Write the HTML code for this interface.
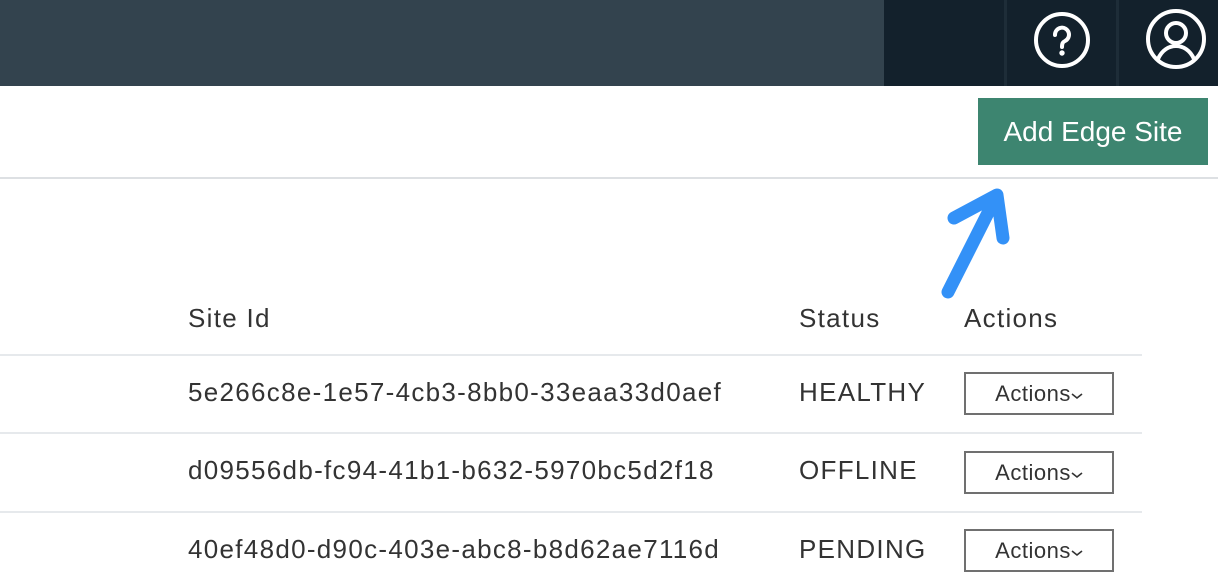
<!DOCTYPE html>
<html><head><style>
body{margin:0;width:1218px;height:576px;overflow:hidden;background:#fff;font-family:"Liberation Sans",sans-serif;color:#333;position:relative}
.a{position:absolute}
.t{position:absolute;font-size:26px;line-height:30px;color:#333;white-space:nowrap;letter-spacing:1.3px}
.btn{position:absolute;left:964px;width:146px;height:39px;border:2px solid #707070;font-size:22px;line-height:39px;text-align:center;color:#333;box-sizing:content-box;letter-spacing:0.5px}
.line{position:absolute;left:0;width:1142px;height:2px;background:#e6e9ec}
</style></head><body>
<div class="a" style="left:0;top:0;width:884px;height:86px;background:#33434e"></div>
<div class="a" style="left:884px;top:0;width:334px;height:86px;background:#13212c"></div>
<div class="a" style="left:1004px;top:0;width:3px;height:86px;background:#1e2d38"></div>
<div class="a" style="left:1116px;top:0;width:3px;height:86px;background:#1e2d38"></div>
<svg class="a" style="left:1030px;top:8px" width="64" height="64" viewBox="0 0 64 64"><circle cx="32" cy="32" r="26" fill="none" stroke="#fff" stroke-width="4"/><path d="M25 27a7 7 0 1 1 10 6c-2 1-3 2-3 6" fill="none" stroke="#fff" stroke-width="4" stroke-linecap="round"/><circle cx="32" cy="45" r="2.7" fill="#fff"/></svg>
<svg class="a" style="left:1144px;top:7px" width="64" height="64" viewBox="0 0 64 64"><circle cx="32" cy="32" r="28" fill="none" stroke="#fff" stroke-width="4"/><circle cx="32" cy="26" r="10" fill="none" stroke="#fff" stroke-width="4"/><path d="M14 52c4-9 11-13 18-13s14 4 18 13" fill="none" stroke="#fff" stroke-width="4"/></svg>
<div class="a" style="left:978px;top:98px;width:230px;height:67px;background:#3d8570;color:#fff;font-size:28px;line-height:67px;text-align:center">Add Edge Site</div>
<div class="a" style="left:0;top:177px;width:1218px;height:2px;background:#dde0e3"></div>
<svg class="a" style="left:930px;top:180px" width="90" height="120"><path d="M18 112L66 17M24 38L67 15L73 58" fill="none" stroke="#3391f7" stroke-width="13" stroke-linecap="round" stroke-linejoin="round"/></svg>
<div class="t" style="left:188px;top:303px">Site Id</div>
<div class="t" style="left:799px;top:303px">Status</div>
<div class="t" style="left:964px;top:303px">Actions</div>
<div class="line" style="top:354px"></div>
<div class="t" style="left:188px;top:377px">5e266c8e-1e57-4cb3-8bb0-33eaa33d0aef</div>
<div class="t" style="left:799px;top:377px">HEALTHY</div>
<div class="btn" style="top:372px">Actions<svg width="12" height="10" viewBox="0 0 12 10"><path d="M1 3l5 4 5-4" fill="none" stroke="#333" stroke-width="1.6"/></svg></div>
<div class="line" style="top:432px"></div>
<div class="t" style="left:188px;top:455px">d09556db-fc94-41b1-b632-5970bc5d2f18</div>
<div class="t" style="left:799px;top:455px">OFFLINE</div>
<div class="btn" style="top:451px">Actions<svg width="12" height="10" viewBox="0 0 12 10"><path d="M1 3l5 4 5-4" fill="none" stroke="#333" stroke-width="1.6"/></svg></div>
<div class="line" style="top:511px"></div>
<div class="t" style="left:188px;top:534px">40ef48d0-d90c-403e-abc8-b8d62ae7116d</div>
<div class="t" style="left:799px;top:534px">PENDING</div>
<div class="btn" style="top:529px">Actions<svg width="12" height="10" viewBox="0 0 12 10"><path d="M1 3l5 4 5-4" fill="none" stroke="#333" stroke-width="1.6"/></svg></div>
</body></html>
